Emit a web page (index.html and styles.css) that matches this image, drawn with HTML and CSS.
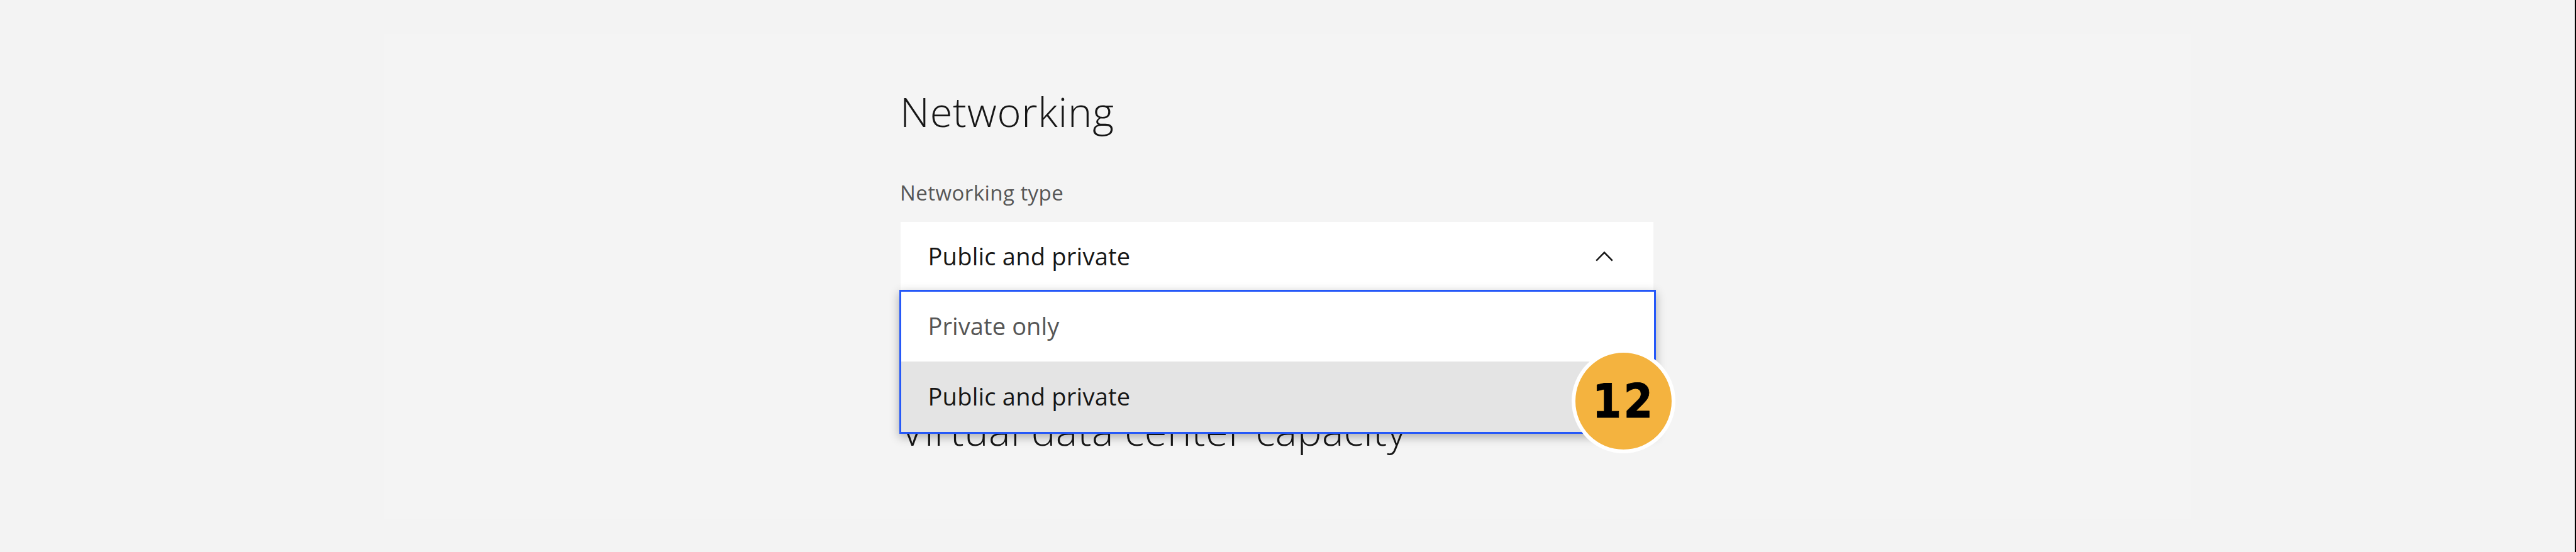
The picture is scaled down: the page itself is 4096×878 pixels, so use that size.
FILE: index.html
```html
<!DOCTYPE html>
<html lang="en">
<head>
<meta charset="utf-8">
<title>Networking</title>
<link rel="stylesheet" href="styles.css">
</head>
<body>
<main class="stage">
  <section class="panel">
    <div class="form">
      <h2 class="heading">Networking</h2>
      <div class="label">Networking type</div>
      <div class="dropdown">
        <div class="field">
          <span class="value">Public and private</span>
          <svg class="chevron" viewBox="0 0 28 18" fill="none" stroke="#161616" stroke-width="2.6"><path d="M1.2 15.6 14 2.6 26.8 15.6"/></svg>
        </div>
        <div class="menu">
          <div class="option">Private only</div>
          <div class="option selected">Public and private</div>
          <div class="badge"><span class="number">12</span></div>
        </div>
      </div>
      <h2 class="heading capacity">Virtual data center capacity</h2>
    </div>
  </section>
</main>
</body>
</html>
```
FILE: styles.css
```css
* {
  box-sizing: border-box;
}

body {
  margin: 0;
  background: #f3f3f3;
  font-family: "Open Sans", "Noto Sans", sans-serif;
  color: #161616;
}

.stage {
  height: 878px;
  padding: 54px 610px 52px 611px;
  border-right: 2px solid #000;
}

.panel {
  height: 772px;
  padding: 83px 0 0 821px;
  background: #f4f4f4;
}

.form {
  width: 1197px;
}

.heading {
  margin: 0 0 0 -1px;
  font-size: 65px;
  line-height: 80px;
  font-weight: 300;
  letter-spacing: 0.77px;
  white-space: nowrap;
}

.label {
  margin: 70px 0 26px -1px;
  font-size: 33px;
  line-height: 40px;
  letter-spacing: 0.45px;
  color: #565656;
}

.dropdown {
  position: relative;
  font-size: 38px;
  letter-spacing: 0.24px;
}

.field {
  display: flex;
  align-items: center;
  justify-content: space-between;
  height: 109px;
  padding: 0 64px 0 43.5px;
  background: #fff;
}

.value {
  padding-bottom: 2px;
}

.chevron {
  width: 28px;
  height: 18px;
}

.menu {
  position: absolute;
  z-index: 1;
  top: 108px;
  left: -2.5px;
  width: 1203px;
  border: 3px solid #2558f8;
  background: #fff;
  box-shadow: 0 5px 15px rgba(0, 0, 0, 0.3);
}

.option {
  display: flex;
  align-items: center;
  height: 111px;
  padding: 0 43px 3px;
  color: #565656;
  letter-spacing: 0.1px;
}

.selected {
  height: 112px;
  background: #e4e4e4;
  color: #161616;
  letter-spacing: 0.24px;
}

.badge {
  position: absolute;
  right: -34.5px;
  bottom: -33.5px;
  display: flex;
  align-items: center;
  justify-content: center;
  width: 165px;
  height: 166px;
  padding-top: 2px;
  border: 6.4px solid #fff;
  border-radius: 50%;
  background: #f4b33f;
}

.number {
  font: bold 74.5px/90px "DejaVu Sans Condensed", "DejaVu Sans", sans-serif;
  font-stretch: condensed;
  letter-spacing: 3px;
  color: #000;
  -webkit-text-stroke: 0.8px #000;
}

.capacity {
  margin: 182px 0 0;
  letter-spacing: 0.5px;
}
```
